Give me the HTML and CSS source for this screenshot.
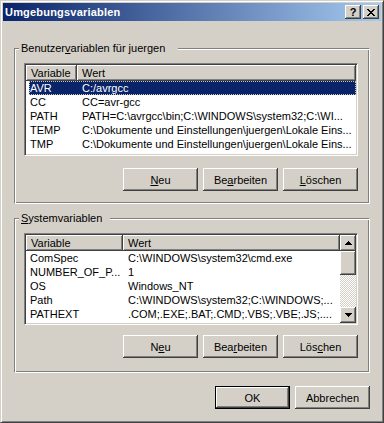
FILE: index.html
```html
<!DOCTYPE html>
<html lang="de">
<head>
  <meta charset="UTF-8" />
  <title>Umgebungsvariablen</title>
  <link rel="stylesheet" href="styles.css">
</head>
<body>
  <div class="window">
    <div class="titlebar">
      <span class="title">Umgebungsvariablen</span>
      <div class="caption-buttons">
        <button class="caption-btn help">?</button>
        <button class="caption-btn close">
          <svg width="8" height="7" viewBox="0 0 8 7" shape-rendering="crispEdges">
            <path d="M0 0h2v1h-2z M6 0h2v1h-2z M1 1h2v1h-2z M5 1h2v1h-2z M2 2h4v1h-4z M3 3h2v1h-2z M2 4h4v1h-4z M1 5h2v1h-2z M5 5h2v1h-2z M0 6h2v1h-2z M6 6h2v1h-2z" fill="#000"/>
          </svg>
        </button>
      </div>
    </div>

    <fieldset class="group user-group">
      <legend class="legend-user">Benutzer<u>v</u>ariablen für juergen</legend>
      <div class="listview user-list">
        <div class="lv-main">
          <div class="lv-header">
            <div class="col-head c1">Variable</div>
            <div class="col-head c2">Wert</div>
          </div>
          <div class="lv-row selected"><span class="c1">AVR</span><span class="c2">C:/avrgcc</span></div>
          <div class="lv-row"><span class="c1">CC</span><span class="c2">CC=avr-gcc</span></div>
          <div class="lv-row"><span class="c1">PATH</span><span class="c2">PATH=C:\avrgcc\bin;C:\WINDOWS\system32;C:\WI...</span></div>
          <div class="lv-row"><span class="c1">TEMP</span><span class="c2">C:\Dokumente und Einstellungen\juergen\Lokale Eins...</span></div>
          <div class="lv-row"><span class="c1">TMP</span><span class="c2">C:\Dokumente und Einstellungen\juergen\Lokale Eins...</span></div>
        </div>
      </div>
      <div class="button-row">
        <button class="btn"><u>N</u>eu</button>
        <button class="btn">Be<u>a</u>rbeiten</button>
        <button class="btn"><u>L</u>öschen</button>
      </div>
    </fieldset>

    <fieldset class="group system-group">
      <legend class="legend-system"><u>S</u>ystemvariablen</legend>
      <div class="listview system-list">
        <div class="lv-main">
          <div class="lv-header">
            <div class="col-head c1">Variable</div>
            <div class="col-head c2">Wert</div>
          </div>
          <div class="lv-row"><span class="c1">ComSpec</span><span class="c2">C:\WINDOWS\system32\cmd.exe</span></div>
          <div class="lv-row"><span class="c1">NUMBER_OF_P...</span><span class="c2">1</span></div>
          <div class="lv-row"><span class="c1">OS</span><span class="c2">Windows_NT</span></div>
          <div class="lv-row"><span class="c1">Path</span><span class="c2">C:\WINDOWS\system32;C:\WINDOWS;...</span></div>
          <div class="lv-row"><span class="c1">PATHEXT</span><span class="c2">.COM;.EXE;.BAT;.CMD;.VBS;.VBE;.JS;....</span></div>
        </div>
        <div class="scrollbar">
          <div class="sb-btn">
            <svg width="7" height="4" viewBox="0 0 7 4" shape-rendering="crispEdges">
              <path d="M3 0h1v1h-1z M2 1h3v1h-3z M1 2h5v1h-5z M0 3h7v1h-7z" fill="#000"/>
            </svg>
          </div>
          <div class="sb-thumb"></div>
          <div class="sb-track"></div>
          <div class="sb-btn">
            <svg width="7" height="4" viewBox="0 0 7 4" shape-rendering="crispEdges">
              <path d="M0 0h7v1h-7z M1 1h5v1h-5z M2 2h3v1h-3z M3 3h1v1h-1z" fill="#000"/>
            </svg>
          </div>
        </div>
      </div>
      <div class="button-row system-buttons">
        <button class="btn">N<u>e</u>u</button>
        <button class="btn">Bea<u>r</u>beiten</button>
        <button class="btn">Lös<u>c</u>hen</button>
      </div>
    </fieldset>

    <div class="footer">
      <button class="btn default">OK</button>
      <button class="btn">Abbrechen</button>
    </div>
  </div>
</body>
</html>
```

FILE: styles.css
```css
body {
  margin: 0;
  font-family: "Liberation Sans", Arial, sans-serif;
  font-size: 11px;
  color: #000;
}

.window {
  width: 384px;
  height: 423px;
  box-sizing: border-box;
  background: #d4d0c8;
  border: 1px solid;
  border-color: #d4d0c8 #404040 #404040 #d4d0c8;
  box-shadow: inset 1px 1px 0 #fff, inset -1px -1px 0 #808080;
  padding: 2px;
}

/* title bar */
.titlebar {
  height: 18px;
  display: flex;
  align-items: center;
  justify-content: space-between;
  padding: 0 2px;
  background: linear-gradient(to right, #0a246a, #a6caf0);
}

.title {
  color: #fff;
  font-weight: bold;
  font-size: 11px;
  letter-spacing: 0.2px;
}

.caption-buttons {
  display: flex;
  gap: 2px;
}

.caption-btn {
  width: 16px;
  height: 14px;
  padding: 0;
  border: 0;
  background: #d4d0c8;
  box-shadow: inset -1px -1px 0 #404040, inset 1px 1px 0 #fff, inset -2px -2px 0 #808080;
  display: flex;
  align-items: center;
  justify-content: center;
}

.caption-btn.help {
  font-family: "Liberation Sans", Arial, sans-serif;
  font-weight: bold;
  font-size: 11px;
  line-height: 14px;
  color: #000;
}

/* group boxes */
.group {
  width: 356px;
  box-sizing: border-box;
  margin: 0 0 0 11px;
  border: 1px solid;
  border-color: #808080 #fff #fff #808080;
  box-shadow: inset 1px 1px 0 #fff, inset -1px -1px 0 #808080;
  padding: 8px 11px 12px 9px;
}

.group legend {
  margin-left: -5px;
  line-height: 13px;
  background: #d4d0c8;
}

.user-group {
  margin-top: 21px;
}

.system-group {
  margin-top: 8px;
  padding-bottom: 14px;
}

.legend-user {
  padding: 0 13px 0 2px;
}

.legend-system {
  padding: 0 8px 0 2px;
}

/* list views */
.listview {
  width: 334px;
  box-sizing: border-box;
  display: flex;
  background: #fff;
  border: 1px solid;
  border-color: #808080 #fff #fff #808080;
  box-shadow: inset 1px 1px 0 #404040, inset -1px -1px 0 #d4d0c8;
  padding: 1px;
  overflow: hidden;
}

.user-list {
  height: 93px;
}

.system-list {
  height: 92px;
}

.lv-main {
  flex: 1;
  min-width: 0;
}

.lv-header {
  display: flex;
  height: 16px;
  line-height: 16px;
}

.col-head {
  background: #d4d0c8;
  padding-left: 5px;
  box-sizing: border-box;
  box-shadow: inset -1px -1px 0 #404040, inset 1px 1px 0 #fff, inset -2px -2px 0 #808080;
}

.col-head.c2 {
  flex: 1;
}

.lv-row {
  display: flex;
  height: 14px;
  line-height: 14px;
  margin-left: 3px;
  white-space: nowrap;
}

.lv-row span {
  overflow: hidden;
}

.lv-row .c1 {
  padding-left: 1px;
  box-sizing: border-box;
}

.lv-row .c2 {
  padding-left: 5px;
  flex: 1;
}

.user-list .col-head.c1 {
  width: 51px;
}

.user-list .lv-row .c1 {
  width: 48px;
}

.system-list .col-head.c1 {
  width: 97px;
}

.system-list .lv-row .c1 {
  width: 94px;
}

.lv-row.selected {
  background: #0a246a;
  color: #fff;
  outline: 1px dotted #c8c4bc;
  outline-offset: -1px;
}

/* scroll bar */
.scrollbar {
  width: 16px;
  display: flex;
  flex-direction: column;
}

.sb-btn,
.sb-thumb {
  background: #d4d0c8;
  box-shadow: inset -1px -1px 0 #404040, inset 1px 1px 0 #fff, inset -2px -2px 0 #808080;
}

.sb-btn {
  height: 16px;
  display: flex;
  align-items: center;
  justify-content: center;
}

.sb-thumb {
  height: 24px;
}

.sb-track {
  flex: 1;
  background: repeating-conic-gradient(#fff 0 25%, #d4d0c8 0 50%) 0 0 / 2px 2px;
}

/* buttons */
.button-row {
  display: flex;
  justify-content: flex-end;
  gap: 5px;
  margin-top: 12px;
}

.system-buttons {
  margin-top: 10px;
}

.btn {
  width: 75px;
  height: 23px;
  padding: 0;
  border: 0;
  background: #d4d0c8;
  font-family: "Liberation Sans", Arial, sans-serif;
  font-size: 11px;
  color: #000;
  box-shadow: inset -1px -1px 0 #404040, inset 1px 1px 0 #fff, inset -2px -2px 0 #808080;
}

.btn.default {
  border: 1px solid #000;
}

.footer {
  width: 356px;
  margin: 13px 0 0 11px;
  display: flex;
  justify-content: flex-end;
  gap: 5px;
}
```
